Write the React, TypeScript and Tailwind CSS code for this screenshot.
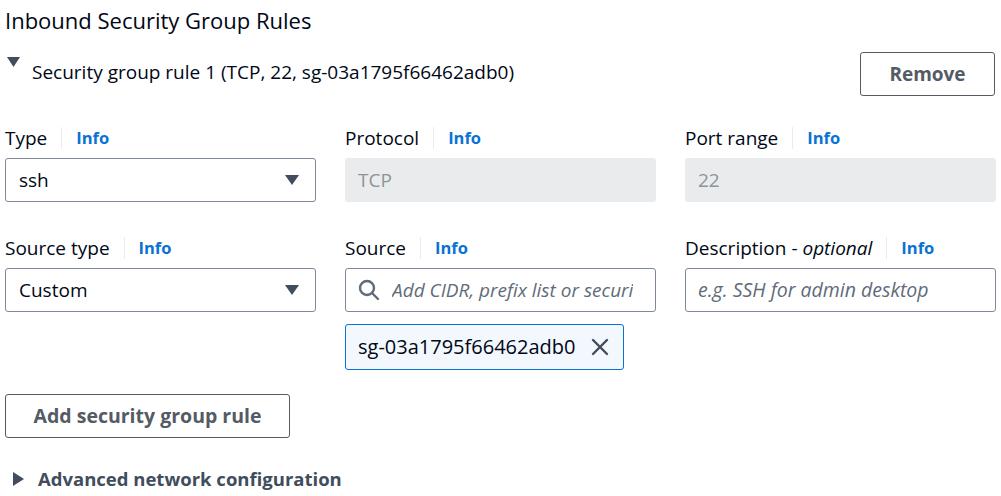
import React from "react";

const font = { fontFamily: '"Open Sans", "Noto Sans", sans-serif' };

function Label({ children }: { children: React.ReactNode }) {
  return (
    <div className="flex items-center h-[24px] text-[19px] text-[#000716]">
      <span>{children}</span>
      <span className="mx-[14px] h-[22px] w-px bg-[#e9ebed]" />
      <span className="text-[16.5px] font-bold text-[#0972d3]">Info</span>
    </div>
  );
}

function Caret() {
  return (
    <svg width="16" height="12" viewBox="0 0 16 12" className="shrink-0">
      <path d="M1 1 L15 1 L8 11 Z" fill="#414d5c" />
    </svg>
  );
}

function Select({ value }: { value: string }) {
  return (
    <div className="mt-[8px] flex h-[44px] items-center justify-between rounded-[3px] border border-[#7d8998] pl-[13px] pr-[15px] text-[19px] text-[#000716]">
      <span>{value}</span>
      <Caret />
    </div>
  );
}

function Disabled({ value }: { value: string }) {
  return (
    <div className="mt-[8px] flex h-[44px] items-center rounded-[3px] bg-[#e9ebed] pl-[13px] text-[19px] text-[#8d9499]">
      {value}
    </div>
  );
}

export default function App() {
  return (
    <div className="w-[1001px] h-[496px] bg-white px-[5px] pt-[5px]" style={font}>
      <div className="text-[22px] leading-[30px] text-[#000716]">Inbound Security Group Rules</div>
      <div className="mt-[17px] flex items-start justify-between">
        <div className="flex items-start">
          <svg width="14" height="12" viewBox="0 0 14 12" className="ml-[2px] mt-[4px] shrink-0">
            <path d="M0 1 L13 1 L6.5 11 Z" fill="#414d5c" />
          </svg>
          <span className="ml-[11px] mt-[7px] text-[19px] leading-[26px] text-[#000716]">
            Security group rule 1 (TCP, 22, sg-03a1795f66462adb0)
          </span>
        </div>
        <div className="mr-[1px] flex h-[44px] w-[135px] items-center justify-center rounded-[3px] border border-[#545b64] text-[19px] font-bold text-[#545b64]">
          Remove
        </div>
      </div>
      <div className="mt-[30px] grid grid-cols-[311px_311px_311px] gap-x-[29px]">
        <div>
          <Label>Type</Label>
          <Select value="ssh" />
        </div>
        <div>
          <Label>Protocol</Label>
          <Disabled value="TCP" />
        </div>
        <div>
          <Label>Port range</Label>
          <Disabled value="22" />
        </div>
      </div>
      <div className="mt-[34px] grid grid-cols-[311px_311px_311px] gap-x-[29px]">
        <div>
          <Label>Source type</Label>
          <Select value="Custom" />
        </div>
        <div>
          <Label>Source</Label>
          <div className="mt-[8px] flex h-[44px] items-center rounded-[3px] border border-[#7d8998] pl-[12px] text-[19px] overflow-hidden whitespace-nowrap">
            <svg width="22" height="22" viewBox="0 0 22 22" fill="none" stroke="#5f6b7a" strokeWidth="2.4" className="shrink-0">
              <circle cx="9" cy="9" r="7" />
              <path d="M14 14 L20 20" strokeLinecap="round" />
            </svg>
            <span className="ml-[12px] italic text-[#5f6b7a] overflow-hidden">Add CIDR, prefix list or securi</span>
          </div>
          <div className="mt-[12px] inline-flex h-[46px] items-center rounded-[3px] border border-[#0972d3] bg-[#f2f8fd] pl-[12px] pr-[13px] text-[20px] text-[#000716]">
            <span>sg-03a1795f66462adb0</span>
            <svg width="20" height="20" viewBox="0 0 20 20" className="ml-[15px] shrink-0" stroke="#414d5c" strokeWidth="2.4" strokeLinecap="round">
              <path d="M3 3 L17 17 M17 3 L3 17" />
            </svg>
          </div>
        </div>
        <div>
          <div className="flex items-center h-[24px] text-[19px] text-[#000716]">
            <span>Description - <i>optional</i></span>
            <span className="mx-[14px] h-[22px] w-px bg-[#e9ebed]" />
            <span className="text-[16.5px] font-bold text-[#0972d3]">Info</span>
          </div>
          <div className="mt-[8px] flex h-[44px] items-center rounded-[3px] border border-[#7d8998] pl-[12px] text-[19.5px] italic text-[#5f6b7a]">
            e.g. SSH for admin desktop
          </div>
        </div>
      </div>
      <div className="mt-[24px] flex h-[44px] w-[285px] items-center justify-center rounded-[3px] border border-[#545b64] text-[19.5px] font-bold text-[#545b64]">
        Add security group rule
      </div>
      <div className="mt-[27px] flex items-center pl-[8px]">
        <svg width="11" height="14" viewBox="0 0 11 14" className="shrink-0">
          <path d="M0 0 L11 7 L0 14 Z" fill="#414d5c" />
        </svg>
        <span className="ml-[14px] text-[18.5px] font-bold text-[#414d5c]">Advanced network configuration</span>
      </div>
    </div>
  );
}
